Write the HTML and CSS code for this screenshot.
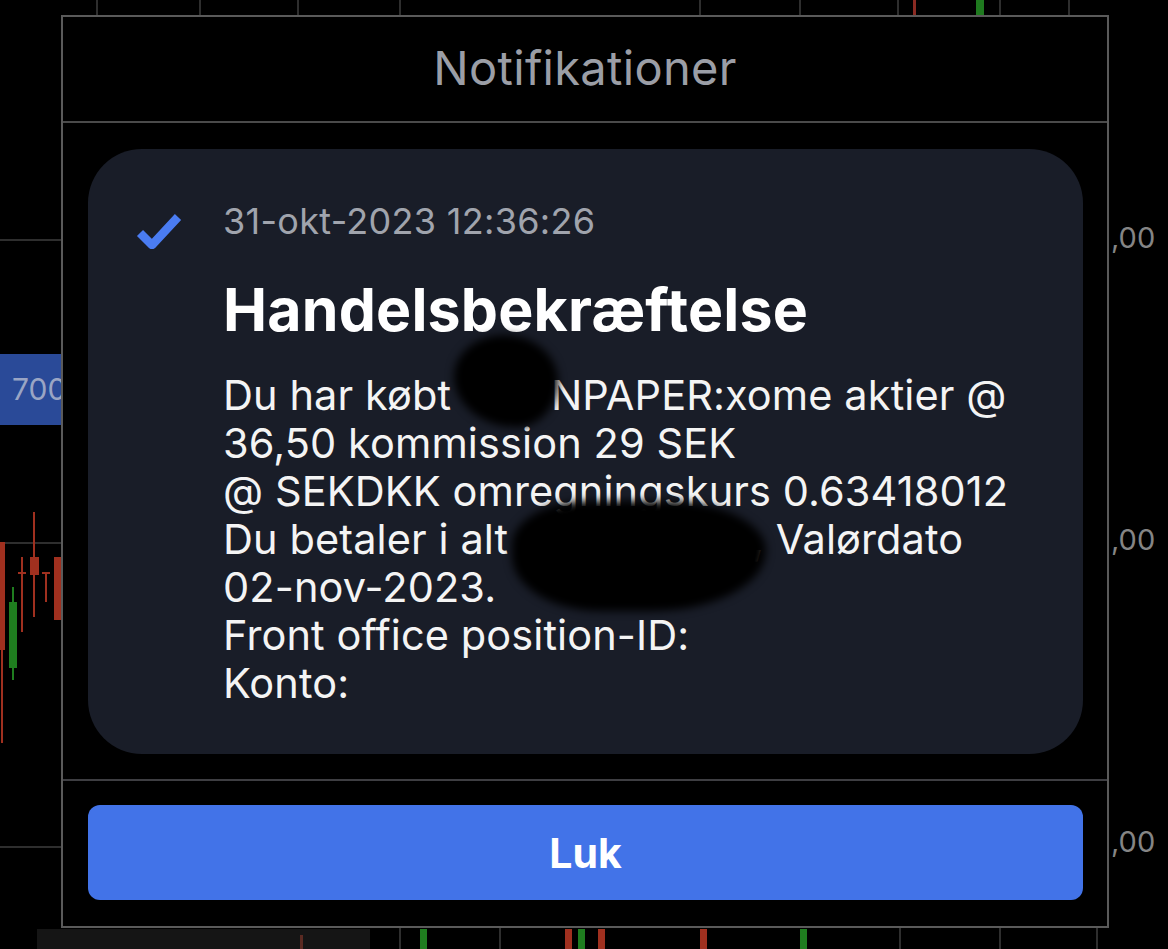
FILE: index.html
```html
<!DOCTYPE html>
<html lang="da">
<head>
<meta charset="utf-8">
<title>Notifikationer</title>
<link rel="stylesheet" href="styles.css">
</head>
<body>
<svg class="chart" width="1168" height="949" viewBox="0 0 1168 949" aria-hidden="true">
  <g stroke="#2e2e2e" stroke-width="2">
    <line x1="97" y1="0" x2="97" y2="15"/><line x1="200" y1="0" x2="200" y2="15"/>
    <line x1="298" y1="0" x2="298" y2="15"/><line x1="400" y1="0" x2="400" y2="15"/>
    <line x1="700" y1="0" x2="700" y2="15"/><line x1="800" y1="0" x2="800" y2="15"/>
    <line x1="898" y1="0" x2="898" y2="15"/><line x1="1000" y1="0" x2="1000" y2="15"/>
    <line x1="1069" y1="0" x2="1069" y2="15"/>
    <line x1="0" y1="240" x2="61" y2="240"/><line x1="0" y1="543" x2="61" y2="543"/>
    <line x1="0" y1="847" x2="61" y2="847"/>
    <line x1="400" y1="928" x2="400" y2="949"/><line x1="500" y1="928" x2="500" y2="949"/>
    <line x1="900" y1="928" x2="900" y2="949"/><line x1="1000" y1="928" x2="1000" y2="949"/>
    <line x1="1097" y1="928" x2="1097" y2="949"/>
  </g>
  <rect x="913" y="0" width="3" height="15" fill="#8a2a22"/>
  <rect x="976" y="0" width="8" height="15" fill="#1f7a1f"/>
  <rect x="0" y="354" width="62" height="71" fill="#2a4a98"/>
  <text x="12" y="400" fill="#9aa5c4" font-family="Inter, sans-serif" font-size="30">700</text>
  <g fill="#a0301f">
    <rect x="0" y="542" width="5" height="108"/><rect x="1" y="640" width="2" height="103"/>
    <rect x="21" y="557" width="2" height="75"/><rect x="18" y="572" width="8" height="2"/>
    <rect x="30" y="557" width="9" height="18"/><rect x="33" y="512" width="2" height="105"/>
    <rect x="45" y="572" width="2" height="30"/><rect x="42" y="572" width="8" height="2"/>
    <rect x="54" y="557" width="7" height="63"/>
  </g>
  <g fill="#1f7d1f">
    <rect x="12" y="587" width="2" height="93"/><rect x="9" y="602" width="8" height="66"/>
  </g>
  <g fill="#858585" font-family="Inter, sans-serif" font-size="29">
    <text x="1111" y="248">,00</text>
    <text x="1111" y="550">,00</text>
    <text x="1111" y="852">,00</text>
  </g>
  <rect x="37" y="929" width="333" height="20" fill="#151515"/>
  <rect x="300" y="935" width="3" height="14" fill="#5a2a22"/>
  <rect x="420" y="929" width="7" height="20" fill="#1f7d1f"/>
  <rect x="565" y="929" width="7" height="20" fill="#a0301f"/>
  <rect x="578" y="929" width="7" height="20" fill="#1f7d1f"/>
  <rect x="598" y="929" width="7" height="20" fill="#a0301f"/>
  <rect x="700" y="929" width="7" height="20" fill="#a0301f"/>
  <rect x="800" y="929" width="7" height="20" fill="#1f7d1f"/>
</svg>

<div class="dialog">
  <header class="dialog-header">Notifikationer</header>
  <div class="dialog-body">
    <div class="card">
      <svg class="check" width="46" height="38" viewBox="0 0 46 38" aria-hidden="true">
        <path d="M4 22 L16 34 L42 6" fill="none" stroke="#4a7cf2" stroke-width="8.5" stroke-linejoin="round"/>
      </svg>
      <div class="content">
        <div class="date">31-okt-2023 12:36:26</div>
        <h1 class="title">Handelsbekræftelse</h1>
        <p class="message">Du har købt <span class="gap gap-1"></span>NPAPER:xome aktier @<br>36,50 kommission 29 SEK<br>@ SEKDKK omregningskurs 0.63418012<br>Du betaler i alt <span class="gap gap-2"></span>, Valørdato<br>02-nov-2023.<br>Front office position-ID:<br>Konto:</p>
      </div>
      <span class="blot blot-1"></span>
      <span class="blot blot-2"></span>
    </div>
  </div>
  <div class="dialog-footer">
    <button class="close-btn" type="button">Luk</button>
  </div>
</div>
</body>
</html>
```

FILE: styles.css
```css
html, body {
  margin: 0;
  padding: 0;
  background: #000;
}

body {
  position: relative;
  width: 1168px;
  height: 949px;
  overflow: hidden;
  font-family: Inter, "Noto Sans", sans-serif;
}

.chart {
  position: absolute;
  left: 0;
  top: 0;
}

.dialog {
  position: absolute;
  left: 61px;
  top: 15px;
  width: 1044px;
  height: 909px;
  border: 2px solid #5a5a5a;
  background: #000;
  display: flex;
  flex-direction: column;
}

.dialog-header {
  height: 106px;
  border-bottom: 2px solid #4a4a4a;
  display: flex;
  align-items: center;
  justify-content: center;
  color: #9b9ea6;
  font-size: 47px;
  letter-spacing: 0.3px;
  padding-bottom: 4px;
  box-sizing: border-box;
}

.dialog-body {
  padding: 26px 24px 25px 25px;
  border-bottom: 2px solid #3e3e42;
}

.card {
  position: relative;
  height: 605px;
  box-sizing: border-box;
  background: #191d28;
  border-radius: 54px;
  display: flex;
  align-items: flex-start;
  gap: 41px;
  padding: 52px 0 0 48px;
}

.check {
  flex: none;
  margin-top: 10px;
}

.content {
  color: #fff;
}

.date {
  color: #a0a4ad;
  font-size: 36px;
  line-height: 40px;
  letter-spacing: 0.3px;
}

.title {
  margin: 37px 0 0;
  font-size: 59px;
  line-height: 64px;
  font-weight: 700;
  letter-spacing: 0.2px;
}

.message {
  margin: 29px 0 0;
  font-size: 41.5px;
  line-height: 48px;
  color: #f4f4f4;
  letter-spacing: 0.1px;
}

.gap {
  display: inline-block;
}

.gap-1 { width: 88px; }
.gap-2 { width: 232px; }

.blot {
  position: absolute;
  background: #000;
  filter: blur(4px);
}

.blot-1 {
  left: 366px;
  top: 186px;
  width: 104px;
  height: 92px;
  border-radius: 48% 52% 40% 60% / 45% 50% 50% 55%;
}

.blot-2 {
  left: 424px;
  top: 352px;
  width: 254px;
  height: 110px;
  border-radius: 30% 40% 45% 35% / 40% 45% 55% 50%;
}

.dialog-footer {
  flex: 1;
  padding: 24px 24px 0 25px;
}

.close-btn {
  width: 100%;
  height: 95px;
  border: none;
  border-radius: 12px;
  background: #4273e8;
  color: #fff;
  font-family: Inter, "Noto Sans", sans-serif;
  font-size: 41px;
  font-weight: 700;
  cursor: pointer;
}
```
